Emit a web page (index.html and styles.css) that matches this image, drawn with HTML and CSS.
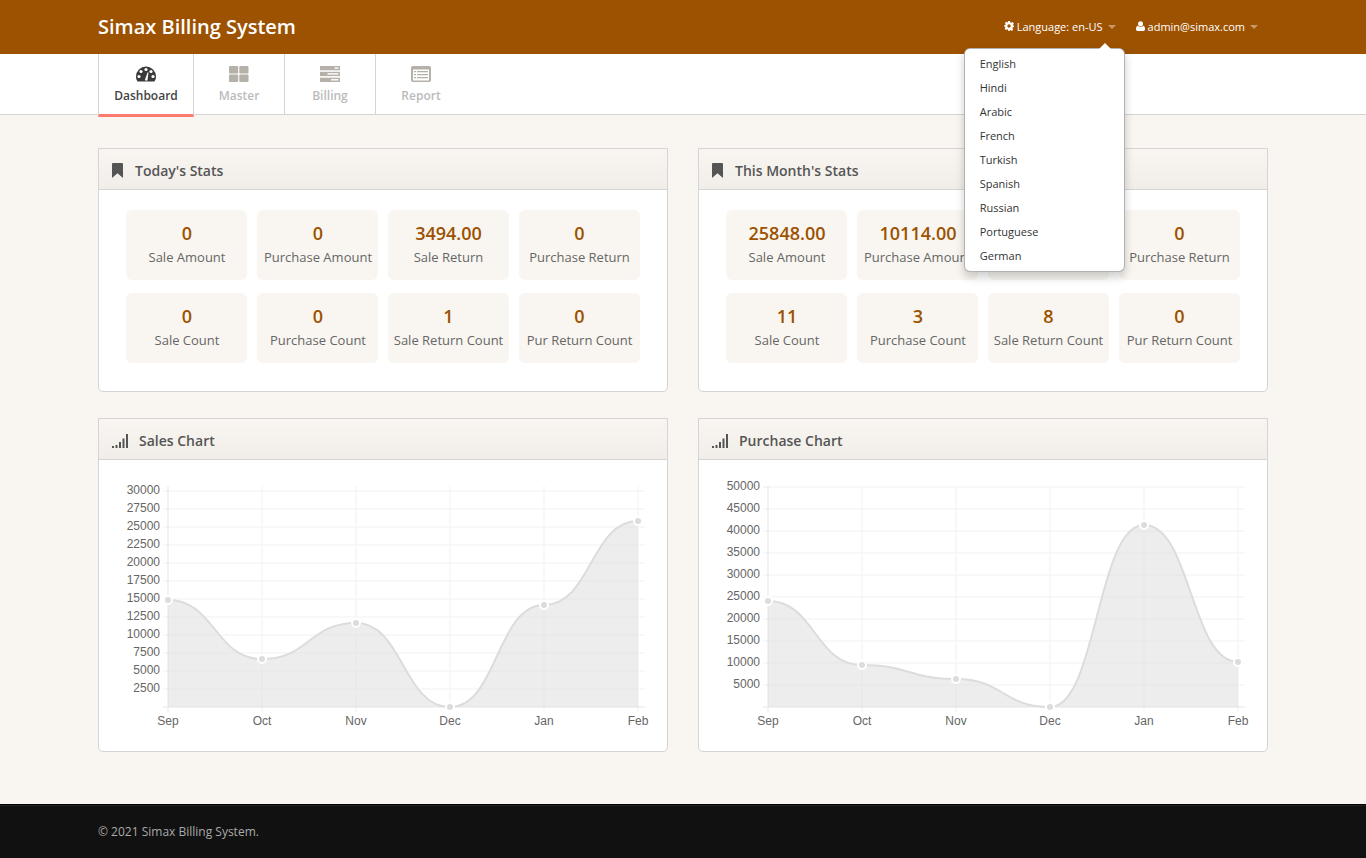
FILE: index.html
```html
<!DOCTYPE html>
<html lang="en">
<head>
<meta charset="utf-8">
<title>Simax Billing System</title>
<link rel="stylesheet" href="styles.css">
</head>
<body>
<header class="topbar">
  <div class="container topbar-inner">
    <a class="brand">Simax Billing System</a>
    <nav class="usernav">
      <div class="usernav-item lang">
        <svg class="uicon" viewBox="0 0 10 10"><path d="M4 0h2l.3 1.4.9.4L8.5 1 9.9 2.4 9 3.7l.4.9L10 5v1l-1.200.3-.4.9.8 1.300L8 9.900l-1.200-.8-.9.4L5.600 10H4.400l-.3-1.300-.9-.4-1.200.8L.6 7.700l.8-1.200-.4-.9L0 5.400V4.400l1.300-.3.4-.9L.9 2 2.200.8l1.200.8.4-.2z"/><circle class="uhole" cx="5" cy="5" r="1.700"/></svg>
        <span>Language: en-US</span><i class="caret"></i>
        <div class="dropdown">
          <a>English</a><a>Hindi</a><a>Arabic</a><a>French</a><a>Turkish</a><a>Spanish</a><a>Russian</a><a>Portuguese</a><a>German</a>
        </div>
      </div>
      <div class="usernav-item">
        <svg class="uicon uicon-user" viewBox="0 0 9 10"><circle cx="4.500" cy="2.700" r="2.500"/><path d="M1.500 4.800c.8.700 1.800 1 3 1s2.200-.3 3-1C8.500 5.200 9 6.500 9 8.300 9 9.400 8.300 10 7.400 10H1.600C.7 10 0 9.400 0 8.300 0 6.500.5 5.200 1.500 4.800z"/></svg>
        <span>admin@simax.com</span><i class="caret"></i>
      </div>
    </nav>
  </div>
</header>

<nav class="subnav">
  <ul class="container tabs">
    <li class="tab active">
      <svg class="tab-icon" viewBox="0 0 20 16"><path d="M10 0.500A10 10 0 0 1 20 10.500C20 12.500 19.400 14 18.500 15.500H1.500C.6 14 0 12.500 0 10.500A10 10 0 0 1 10 0.500Z"/><g class="hole"><circle cx="3" cy="10.500" r="1.600"/><circle cx="5" cy="5.500" r="1.600"/><circle cx="10" cy="3.500" r="1.600"/><circle cx="15" cy="5.500" r="1.600"/><circle cx="17" cy="10.500" r="1.600"/><path d="M9 13.500L11.700 6.200 12.500 6.400 11.500 14a1.300 1.300 0 0 1-2.500-.5z"/></g></svg>
      <span>Dashboard</span>
    </li>
    <li class="tab">
      <svg class="tab-icon" viewBox="0 0 20 16"><rect x="0" width="9.200" height="7.500" rx="1"/><rect x="10.300" width="9.200" height="7.500" rx="1"/><rect x="0" y="8.500" width="9.200" height="7.500" rx="1"/><rect x="10.300" y="8.500" width="9.200" height="7.500" rx="1"/></svg>
      <span>Master</span>
    </li>
    <li class="tab">
      <svg class="tab-icon" viewBox="0 0 20 16"><rect width="20" height="4.300"/><rect y="5.800" width="20" height="4.300"/><rect y="11.700" width="20" height="4.300"/><g class="hole"><rect x="14.500" y="1.400" width="4" height="1.400"/><rect x="7.500" y="7.200" width="11" height="1.400"/><rect x="11" y="13.100" width="7.500" height="1.400"/></g></svg>
      <span>Billing</span>
    </li>
    <li class="tab last">
      <svg class="tab-icon" viewBox="0 0 20 16"><rect width="20" height="16" rx="2"/><rect class="hole" x="2" y="3.500" width="16" height="11"/><path d="M3 5h2v1.200H3zM6 5h11v1.200H6zM3 8h2v1.200H3zM6 8h11v1.200H6zM3 11h2v1.200H3zM6 11h11v1.200H6z"/></svg>
      <span>Report</span>
    </li>
  </ul>
</nav>

<main class="main">
  <div class="container grid">
    <section class="widget">
      <h3 class="widget-head"><svg class="head-icon" viewBox="0 0 11 15"><path d="M1 0h9a1 1 0 0 1 1 1v14L5.500 10.200 0 15V1a1 1 0 0 1 1-1z"/></svg>Today's Stats</h3>
      <div class="stats">
        <div class="stat"><b>0</b><span>Sale Amount</span></div>
        <div class="stat"><b>0</b><span>Purchase Amount</span></div>
        <div class="stat"><b>3494.00</b><span>Sale Return</span></div>
        <div class="stat"><b>0</b><span>Purchase Return</span></div>
        <div class="stat"><b>0</b><span>Sale Count</span></div>
        <div class="stat"><b>0</b><span>Purchase Count</span></div>
        <div class="stat"><b>1</b><span>Sale Return Count</span></div>
        <div class="stat"><b>0</b><span>Pur Return Count</span></div>
      </div>
    </section>
    <section class="widget">
      <h3 class="widget-head"><svg class="head-icon" viewBox="0 0 11 15"><path d="M1 0h9a1 1 0 0 1 1 1v14L5.500 10.200 0 15V1a1 1 0 0 1 1-1z"/></svg>This Month's Stats</h3>
      <div class="stats">
        <div class="stat"><b>25848.00</b><span>Sale Amount</span></div>
        <div class="stat"><b>10114.00</b><span>Purchase Amount</span></div>
        <div class="stat"></div>
        <div class="stat"><b>0</b><span>Purchase Return</span></div>
        <div class="stat"><b>11</b><span>Sale Count</span></div>
        <div class="stat"><b>3</b><span>Purchase Count</span></div>
        <div class="stat"><b>8</b><span>Sale Return Count</span></div>
        <div class="stat"><b>0</b><span>Pur Return Count</span></div>
      </div>
    </section>

    <section class="widget">
      <h3 class="widget-head"><svg class="head-icon head-signal" viewBox="0 0 16 14"><path d="M0 12h2v2H0zM3.500 11h2v3h-2zM7 8h2v6H7zM10.500 4.500h2V14h-2zM14 0h2v14h-2z"/></svg>Sales Chart</h3>
      <svg class="chart" viewBox="99 460 568 291">
        <path class="grid-line" d="M163 491H645M163 509H645M163 527H645M163 545H645M163 563H645M163 581H645M163 599H645M163 617H645M163 635H645M163 653H645M163 671H645M163 689H645M262 486V712M356 486V712M450 486V712M544 486V712M638 486V712"/>
        <path class="axis-line" d="M168 486V712M163 707H645"/>
        <path class="area" d="M168 600C215 600 215 659 262 659C309 659 309 623 356 623C403 623 403 707 450 707C497 707 497 605 544 605C591 605 591 521 638 521V707H168Z"/>
        <path class="curve" d="M168 600C215 600 215 659 262 659C309 659 309 623 356 623C403 623 403 707 450 707C497 707 497 605 544 605C591 605 591 521 638 521"/>
        <g class="dots"><circle cx="168" cy="600" r="4"/><circle cx="262" cy="659" r="4"/><circle cx="356" cy="623" r="4"/><circle cx="450" cy="707" r="4"/><circle cx="544" cy="605" r="4"/><circle cx="638" cy="521" r="4"/></g>
        <g class="ylabels">
          <text x="160" y="494">30000</text><text x="160" y="512">27500</text><text x="160" y="530">25000</text><text x="160" y="548">22500</text><text x="160" y="566">20000</text><text x="160" y="584">17500</text><text x="160" y="602">15000</text><text x="160" y="620">12500</text><text x="160" y="638">10000</text><text x="160" y="656">7500</text><text x="160" y="674">5000</text><text x="160" y="692">2500</text>
        </g>
        <g class="xlabels"><text x="168" y="725">Sep</text><text x="262" y="725">Oct</text><text x="356" y="725">Nov</text><text x="450" y="725">Dec</text><text x="544" y="725">Jan</text><text x="638" y="725">Feb</text></g>
      </svg>
    </section>
    <section class="widget">
      <h3 class="widget-head"><svg class="head-icon head-signal" viewBox="0 0 16 14"><path d="M0 12h2v2H0zM3.500 11h2v3h-2zM7 8h2v6H7zM10.500 4.500h2V14h-2zM14 0h2v14h-2z"/></svg>Purchase Chart</h3>
      <svg class="chart" viewBox="99 460 568 291">
        <path class="grid-line" d="M163 487H645M163 509H645M163 531H645M163 553H645M163 575H645M163 597H645M163 619H645M163 641H645M163 663H645M163 685H645M262 486V712M356 486V712M450 486V712M544 486V712M638 486V712"/>
        <path class="axis-line" d="M168 486V712M163 707H645"/>
        <path class="area" d="M168 601C215 601 215 665 262 665C309 665 309 679 356 679C403 679 403 707 450 707C497 707 497 525 544 525C591 525 591 662 638 662V707H168Z"/>
        <path class="curve" d="M168 601C215 601 215 665 262 665C309 665 309 679 356 679C403 679 403 707 450 707C497 707 497 525 544 525C591 525 591 662 638 662"/>
        <g class="dots"><circle cx="168" cy="601" r="4"/><circle cx="262" cy="665" r="4"/><circle cx="356" cy="679" r="4"/><circle cx="450" cy="707" r="4"/><circle cx="544" cy="525" r="4"/><circle cx="638" cy="662" r="4"/></g>
        <g class="ylabels">
          <text x="160" y="490">50000</text><text x="160" y="512">45000</text><text x="160" y="534">40000</text><text x="160" y="556">35000</text><text x="160" y="578">30000</text><text x="160" y="600">25000</text><text x="160" y="622">20000</text><text x="160" y="644">15000</text><text x="160" y="666">10000</text><text x="160" y="688">5000</text>
        </g>
        <g class="xlabels"><text x="168" y="725">Sep</text><text x="262" y="725">Oct</text><text x="356" y="725">Nov</text><text x="450" y="725">Dec</text><text x="544" y="725">Jan</text><text x="638" y="725">Feb</text></g>
      </svg>
    </section>
  </div>
</main>

<footer class="footer">
  <div class="container">© 2021 Simax Billing System.</div>
</footer>
</body>
</html>
```

FILE: styles.css
```css
* { box-sizing: border-box; }
html, body { margin: 0; padding: 0; }
body {
  font-family: "Open Sans", "Liberation Sans", sans-serif;
  font-size: 13px;
  color: #555;
  background: #f9f6f1;
  min-height: 858px;
  display: flex;
  flex-direction: column;
}
.container { width: 1170px; margin: 0 auto; }

/* top bar */
.topbar { height: 54px; background: #9c5200; color: #fff; }
.topbar-inner { height: 52px; display: flex; align-items: center; justify-content: space-between; }
.brand { font-size: 20px; font-weight: 600; color: #fff; }
.usernav { display: flex; align-items: center; gap: 20px; padding-right: 10px; font-size: 11px; }
.usernav-item { position: relative; display: flex; align-items: center; }
.uicon { width: 10px; height: 10px; margin-right: 3px; fill: #fff; }
.uicon-user { width: 9px; }
.uhole { fill: #9c5200; }
.caret { width: 0; height: 0; margin-left: 5px; margin-top: 1px; border: 4px solid transparent; border-top-color: #c8986a; border-bottom-width: 0; }

.dropdown {
  position: absolute;
  top: 29px;
  left: -40px;
  width: 161px;
  height: 224px;
  padding: 4px 0;
  background: #fff;
  border: 1px solid rgba(0, 0, 0, .3);
  border-radius: 6px;
  box-shadow: 0 5px 10px rgba(0, 0, 0, .2);
  z-index: 10;
}
.dropdown::after {
  content: "";
  position: absolute;
  top: -6px;
  right: 13px;
  border: 6px solid transparent;
  border-top-width: 0;
  border-bottom-color: #fff;
}
.dropdown a { display: block; height: 24px; padding-left: 15px; line-height: 22px; font-size: 11px; color: #333; }

/* tabs */
.subnav { height: 61px; background: #fff; border-bottom: 1px solid #d5d5d5; }
.tabs { list-style: none; padding: 0; display: flex; height: 60px; }
.tab {
  width: 91px;
  height: 60px;
  padding-top: 12px;
  border-right: 1px solid #d5d5d5;
  display: flex;
  flex-direction: column;
  align-items: center;
  font-size: 12px;
  font-weight: 600;
  color: #bbb;
  fill: #b5b0a8;
}
.tab.last { border-right: 0; padding-right: 1px; }
.tab span { margin-top: 6px; line-height: 16px; }
.tab-icon { width: 20px; height: 16px; }
.hole { fill: #fff; }
.tab.active {
  width: 96px;
  height: 63px;
  border-left: 1px solid #d5d5d5;
  border-bottom: 3px solid #ff7a6e;
  border-right: 1px solid #d5d5d5;
  color: #444;
  fill: #3a3a3a;
}

/* main grid */
.main { flex: 1; padding: 33px 0 52px; }
.grid { display: grid; grid-template-columns: 570px 570px; column-gap: 30px; row-gap: 26px; }
.widget { background: #fff; border: 1px solid #d5d5d5; border-radius: 0 0 5px 5px; }
.widget-head {
  height: 41px;
  margin: 0;
  padding: 3px 0 0 13px;
  display: flex;
  align-items: center;
  font-size: 14px;
  font-weight: 600;
  color: #555;
  background: linear-gradient(#f9f6f1, #f1eee9);
  border-bottom: 1px solid #d5d5d5;
}
.head-icon { width: 11px; height: 15px; margin-right: 12px; fill: #555; }
.head-signal { width: 16px; height: 14px; margin-right: 11px; }

/* stats */
.stats {
  padding: 20px 27px 28px;
  display: grid;
  grid-template-columns: repeat(4, 121px);
  column-gap: 10px;
  row-gap: 13px;
}
.stat {
  height: 70px;
  padding-top: 11px;
  background: #f9f6f1;
  border-radius: 6px;
  display: flex;
  flex-direction: column;
  align-items: center;
  white-space: nowrap;
}
.stat:nth-child(4n+1), .stat:nth-child(4n+2) { padding-left: 1px; }
.stat b { font-size: 18px; font-weight: 600; line-height: 25px; color: #9c5200; }
.stat span { font-size: 13px; line-height: 22px; color: #666; }

/* charts */
.chart { display: block; width: 568px; height: 291px; }
.chart text { font-family: "Liberation Sans", Arial, sans-serif; font-size: 12px; fill: #666; }
.grid-line { fill: none; stroke: rgba(0, 0, 0, .04); stroke-width: 1.500; }
.axis-line { fill: none; stroke: rgba(0, 0, 0, .07); stroke-width: 1.500; }
.area { fill: rgba(220, 220, 220, .5); }
.curve { fill: none; stroke: #dcdcdc; stroke-width: 2; }
.dots circle { fill: #dcdcdc; stroke: #fff; stroke-width: 2; }
.ylabels text { text-anchor: end; }
.xlabels text { text-anchor: middle; }

/* footer */
.footer {
  height: 54px;
  background: #111;
  border-top: 1px solid #000;
  box-shadow: inset 0 1px 0 #222;
  color: #aaa;
  font-size: 12px;
  line-height: 53px;
}
```
